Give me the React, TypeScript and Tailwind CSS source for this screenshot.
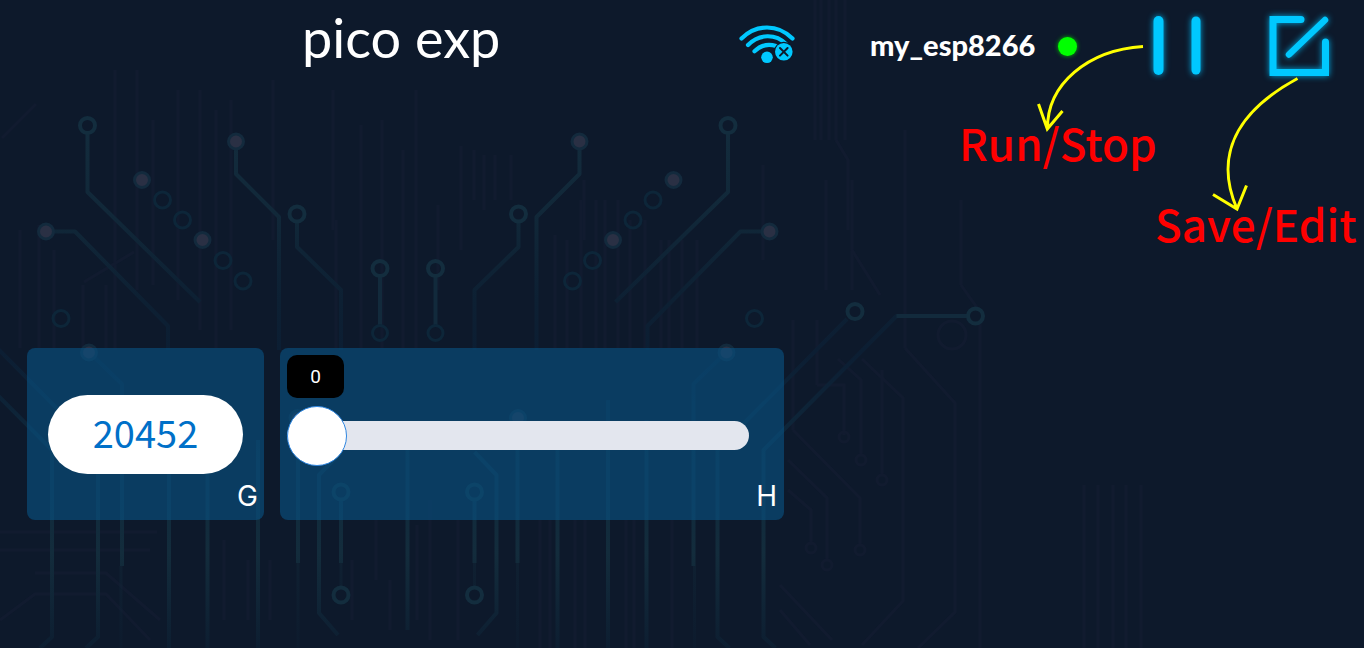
import { useState } from "react";

type Segment = [x: number, top: number, bottom: number];

const faintLines: Segment[] = [
  [115, 70, 350], [137, 70, 290], [153, 120, 285], [178, 90, 300], [200, 90, 330], [216, 110, 348],
  [231, 100, 330], [273, 80, 240], [333, 90, 230], [336, 220, 348], [361, 125, 348], [382, 120, 348],
  [403, 150, 348], [416, 90, 348], [461, 146, 250], [474, 150, 200], [484, 155, 210], [495, 155, 200],
  [511, 155, 200], [438, 205, 290], [584, 180, 240], [555, 235, 348], [567, 240, 348], [581, 200, 348],
  [596, 200, 348], [605, 200, 348], [618, 200, 348], [630, 220, 348], [645, 220, 348], [661, 240, 348],
  [669, 240, 348], [682, 240, 348], [697, 240, 348], [763, 165, 260], [20, 230, 348], [39, 225, 348],
  [54, 250, 348], [83, 285, 348], [106, 285, 348], [815, 0, 140], [821, 0, 140], [829, 0, 140],
  [836, 0, 140], [845, 0, 140], [793, 320, 430], [817, 320, 385], [826, 180, 290], [852, 180, 290],
  [905, 130, 348], [961, 200, 285], [417, 525, 620], [430, 500, 640], [458, 520, 640], [540, 520, 648],
  [550, 520, 648], [575, 520, 648], [585, 520, 648], [626, 520, 648], [634, 520, 648], [672, 520, 648],
  [224, 540, 620], [248, 560, 620], [270, 560, 620], [352, 560, 620], [376, 520, 580], [390, 580, 630],
  [1084, 485, 648], [1098, 485, 648], [1113, 485, 648], [1126, 485, 648], [1141, 485, 648],
];

function TraceHalf() {
  return (
    <g id="traces" fill="none" stroke="url(#trace)" strokeWidth="4" strokeLinejoin="round">
      <path d="M87.500 134V192L200 302" />
      <path d="M236 150V174L279 217V350" />
      <path d="M297 222V247L341 290V350" />
      <path d="M380 277V325" stroke="#122a3c" />
      <path d="M54 231.500H75L168 326V350" />
      <path d="M89 352L122 384V566" />
      <path d="M-31.500 319L98 450V637L86 648M-160 316H-81L52 450V637L40 648" />
      <path d="M-160 316H-81" stroke="#122a3c" />
      <path d="M169 420V648M207.500 400V648M258 440V648M298 424V563M341 500V563" />
      <path d="M341 452L319 475V613L338 635" />
      <path d="M298 563V648M121 566V648M341 563V586" strokeWidth="3" opacity="0.4" />
      <g stroke="#132d3e">
        <circle cx="87.500" cy="125.500" r="7.500" />
        <circle cx="297" cy="214" r="7.500" />
        <circle cx="380" cy="268.500" r="7.500" />
        <circle cx="341" cy="492" r="7.500" />
        <circle cx="341" cy="595" r="7.500" />
        <circle cx="-39.500" cy="311.500" r="7.500" fill="#0d192b" />
        <circle cx="-160" cy="316" r="7.500" fill="#0d192b" />
      </g>
      <g stroke="#0d2639" strokeWidth="3">
        <circle cx="380" cy="333" r="7.500" />
        <circle cx="61" cy="318.500" r="8" />
        <circle cx="162.500" cy="200" r="8" />
        <circle cx="182.500" cy="220" r="8" />
        <circle cx="223" cy="260.500" r="8" />
        <circle cx="243" cy="281" r="8" />
      </g>
      <g fill="#2a3044" stroke="#132a3d" strokeWidth="3">
        <circle cx="142" cy="180" r="7.500" />
        <circle cx="202.500" cy="240" r="7.500" />
        <circle cx="236" cy="141.500" r="7.500" />
        <circle cx="46" cy="231.500" r="7.500" />
        <circle cx="89" cy="352.500" r="7.500" />
        <circle cx="297.500" cy="418" r="7.500" />
      </g>
    </g>
  );
}

function CircuitBackground() {
  return (
    <svg
      aria-hidden="true"
      className="pointer-events-none absolute inset-0 h-full w-full"
      viewBox="0 0 1364 648"
      preserveAspectRatio="xMinYMin slice"
    >
      <defs>
        <linearGradient id="trace" gradientUnits="userSpaceOnUse" x1="0" y1="120" x2="0" y2="648">
          <stop offset="0" stopColor="#132c3d" />
          <stop offset="0.17" stopColor="#112839" />
          <stop offset="0.34" stopColor="#0d2033" />
          <stop offset="0.44" stopColor="#0c1e33" />
          <stop offset="0.65" stopColor="#0f293c" />
          <stop offset="0.82" stopColor="#132c3c" />
          <stop offset="1" stopColor="#0d1e31" />
        </linearGradient>
      </defs>
      <g stroke="#131c31" fill="none" strokeWidth="3" opacity="0.8">
        {faintLines.map(([x, top, bottom]) => (
          <path key={`${x}-${top}`} d={`M${x} ${top}V${bottom}`} />
        ))}
        <path d="M2 138L36 104M84 282L134 252M0 532H157M0 550H150M35 573H106L160 620M0 620L35 594H106L150 640" />
        <path d="M905 348L955 403V612L918 648M862 359L903 398V601L862 645M838 359L861 380V455M793 430L860 498V545" />
        <path d="M817 385H844V435M788 460L827 498V560M788 490L811 510V545M961 285L980 312V648M882 370V475" />
        <path d="M780 585L832 640M852 250L880 295M780 610L810 645M836 140L848 160V230" />
        <circle cx="952" cy="335" r="14" />
        <circle cx="844" cy="437" r="5" />
        <circle cx="861" cy="460" r="5" />
        <circle cx="882" cy="480" r="5" />
        <circle cx="827" cy="565" r="5" />
        <circle cx="811" cy="548" r="5" />
        <circle cx="860" cy="550" r="5" />
      </g>
      <TraceHalf />
      <use href="#traces" transform="translate(815.500 0) scale(-1 1)" />
      <path d="M407.500 430V630" stroke="url(#trace)" strokeWidth="4" />
    </svg>
  );
}

function WifiOffIcon() {
  return (
    <svg className="h-10 w-14" viewBox="0 0 56 40" fill="none" stroke="#00c8ff" strokeLinecap="round">
      <g strokeWidth="4.200">
        <path d="M2.500 13.500C17 -1.200 39 -1.200 53.500 13.500" />
        <path d="M9 20C20 8.500 37 8.500 47 19" />
        <path d="M15.500 26.200C21.500 20.500 29.500 18.500 37 21" />
      </g>
      <circle cx="28" cy="32.300" r="5.800" fill="#00c8ff" stroke="none" />
      <circle cx="44.800" cy="26.800" r="10" fill="#0d192b" stroke="none" />
      <circle cx="44.800" cy="26.800" r="8.800" fill="#00c8ff" stroke="none" />
      <path d="M41 23L48.600 30.600M48.600 23L41 30.600" stroke="#0d192b" strokeWidth="2" />
    </svg>
  );
}

function PauseIcon() {
  return (
    <svg
      className="h-16 w-14 overflow-visible drop-shadow-[0_0_3px_#00a8e0]"
      viewBox="0 0 56 64"
      stroke="#00c8ff"
      strokeLinecap="round"
    >
      <path d="M9.500 7V56" strokeWidth="10" />
      <path d="M47 7V56" strokeWidth="9" />
    </svg>
  );
}

function EditIcon() {
  return (
    <svg
      className="h-16 w-16 overflow-visible drop-shadow-[0_0_3px_#00a8e0]"
      viewBox="0 0 64 64"
      fill="none"
      stroke="#00c8ff"
      strokeWidth="7"
      strokeLinecap="round"
    >
      <path d="M34 5.500H6V58.500H58.500V28" />
      <path d="M22 40.500L58 6" strokeWidth="6.500" />
    </svg>
  );
}

function Annotations() {
  return (
    <div className="pointer-events-none absolute top-0 right-0 h-64 w-[464px] font-['Noto_Sans_CJK_SC',sans-serif] text-[44px] leading-[60px] font-medium text-[#ff0000]">
      <span className="absolute top-[112px] left-[59px]">Run/Stop</span>
      <span className="absolute top-[193px] left-[255px]">Save/Edit</span>
      <svg
        aria-hidden="true"
        className="absolute inset-0 h-full w-full"
        viewBox="900 0 464 256"
        fill="none"
        stroke="#ffff00"
        strokeWidth="3"
      >
        <path d="M1143 46.500C1088 50 1047 84 1047.500 129M1038.500 104L1047.300 129L1062.500 111" />
        <path d="M1297.500 78.500C1236 112 1214 156 1237 209M1213 194.500L1237 209L1246.500 185.500" />
      </svg>
    </div>
  );
}

export default function App() {
  const [running, setRunning] = useState(true);
  const [level, setLevel] = useState(0);

  return (
    <div className="relative min-h-screen overflow-hidden bg-[#0d192b] font-['Noto_Sans_CJK_SC',sans-serif] text-white">
      <CircuitBackground />

      <header className="relative flex h-[92px] items-center pr-[33px]">
        <h1 className="flex-1 pb-4 pl-[302px] font-['Lato','Noto_Sans',sans-serif] text-[54px] leading-[64px] whitespace-nowrap">
          pico exp
        </h1>
        <div className="mr-[75px] pb-0.5" role="img" aria-label="Wi-Fi disconnected">
          <WifiOffIcon />
        </div>
        <div className="flex w-[207px] items-center justify-between">
          <span className="pb-0.5 font-['Lato','Noto_Sans',sans-serif] text-[29px] leading-10 font-black">
            my_esp8266
          </span>
          <span className="h-[19px] w-[19px] rounded-full bg-[#00ff00] shadow-[0_0_4px_#00c000]" />
        </div>
        <button
          type="button"
          className="ml-[72px] flex cursor-pointer"
          aria-label="Run or stop"
          aria-pressed={running}
          onClick={() => setRunning(!running)}
        >
          <PauseIcon />
        </button>
        <button type="button" className="ml-[62px] flex cursor-pointer" aria-label="Save or edit">
          <EditIcon />
        </button>
      </header>

      <main className="relative flex gap-4 pt-64 pl-[27px]">
        <section className="flex h-[172px] w-[237px] flex-col rounded-lg bg-[#095486]/60 px-[21px] pt-[47px]">
          <output className="flex h-[79px] shrink-0 items-center justify-center rounded-full bg-white pb-1.5 text-[38px] leading-[48px] text-[#0070c8]">
            20452
          </output>
          <span className="-mr-[15px] self-end pt-1 font-['Inter',sans-serif] text-[28px] leading-9">G</span>
        </section>

        <section className="flex h-[172px] w-[504px] flex-col rounded-lg bg-[#095486]/60 px-[7px] pt-[7px]">
          <output
            htmlFor="level"
            className="flex h-[43px] w-[57px] shrink-0 items-center justify-center rounded-[10px] bg-black font-['Roboto',sans-serif] text-[19px] leading-6"
          >
            {level}
          </output>
          <input
            id="level"
            type="range"
            aria-label="H"
            min={0}
            max={1023}
            value={level}
            onChange={(event) => setLevel(Number(event.target.value))}
            className="mt-2 mr-7 h-[58px] shrink-0 cursor-pointer appearance-none bg-transparent [&::-webkit-slider-runnable-track]:h-[29px] [&::-webkit-slider-runnable-track]:rounded-full [&::-webkit-slider-runnable-track]:bg-[#e3e6ee] [&::-webkit-slider-thumb]:-mt-[15px] [&::-webkit-slider-thumb]:size-[60px] [&::-webkit-slider-thumb]:appearance-none [&::-webkit-slider-thumb]:rounded-full [&::-webkit-slider-thumb]:border [&::-webkit-slider-thumb]:border-[#2f86e0] [&::-webkit-slider-thumb]:bg-white"
          />
          <label htmlFor="level" className="self-end pt-[14px] font-['Inter',sans-serif] text-[28px] leading-9">
            H
          </label>
        </section>
      </main>

      <Annotations />
    </div>
  );
}
